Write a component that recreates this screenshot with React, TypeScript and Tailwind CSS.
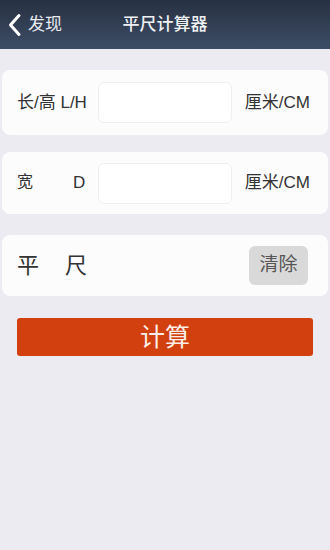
const font = { fontFamily: '"Liberation Sans", "Noto Sans CJK SC", sans-serif' };

export default function App() {
  return (
    <div className="w-[330px] h-[550px] bg-[#ebebf1] flex flex-col" style={font}>
      <div className="h-[49px] bg-gradient-to-b from-[#273141] to-[#3d4c66] flex items-center relative">
        <svg width="16" height="24" viewBox="0 0 16 24" className="ml-[7px]">
          <path d="M12 2.5 L3.5 12 L12 21.5" fill="none" stroke="#fff" strokeWidth="3" strokeLinecap="round" strokeLinejoin="round" />
        </svg>
        <span className="ml-[5px] text-[17px] text-[#e8ebf0]">发现</span>
        <span className="absolute left-1/2 -translate-x-1/2 text-[17px] font-medium text-[#eef0f3]">平尺计算器</span>
      </div>
      <div className="mt-[21px] flex flex-col gap-[17px]">
        <div className="mx-[2px] h-[65px] rounded-lg bg-[#fcfcfd] flex items-center pl-[15px] pr-[18px]">
          <div className="w-[81px] text-[17px] text-[#333] whitespace-nowrap">长/高 L/H</div>
          <div className="w-[134px] h-[41px] rounded-md border border-[#efeff2] bg-white" />
          <div className="ml-auto text-[17px] text-[#333]">厘米/CM</div>
        </div>
        <div className="mx-[2px] h-[62px] rounded-lg bg-[#fcfcfd] flex items-center pl-[15px] pr-[18px]">
          <div className="w-[81px] text-[17px] text-[#333] flex">
            <span className="text-[16px]">宽</span>
            <span className="ml-[40px]">D</span>
          </div>
          <div className="w-[134px] h-[41px] rounded-md border border-[#efeff2] bg-white" />
          <div className="ml-auto text-[17px] text-[#333]">厘米/CM</div>
        </div>
      </div>
      <div className="mt-[21px] mx-[2px] h-[61px] rounded-lg bg-[#fcfcfd] flex items-center pl-[15px] pr-[20px]">
        <span className="text-[22px] text-[#333]">平</span>
        <span className="ml-[26px] text-[22px] text-[#333]">尺</span>
        <button className="ml-auto w-[59px] h-[39px] rounded-md bg-[#d9d9d9] text-[19px] text-[#555]">清除</button>
      </div>
      <div className="px-[17px] mt-[22px]">
        <button className="w-full h-[38px] rounded-[3px] bg-[#d3400f] text-[#fbeee8] text-[25px] leading-none">计算</button>
      </div>
    </div>
  );
}
